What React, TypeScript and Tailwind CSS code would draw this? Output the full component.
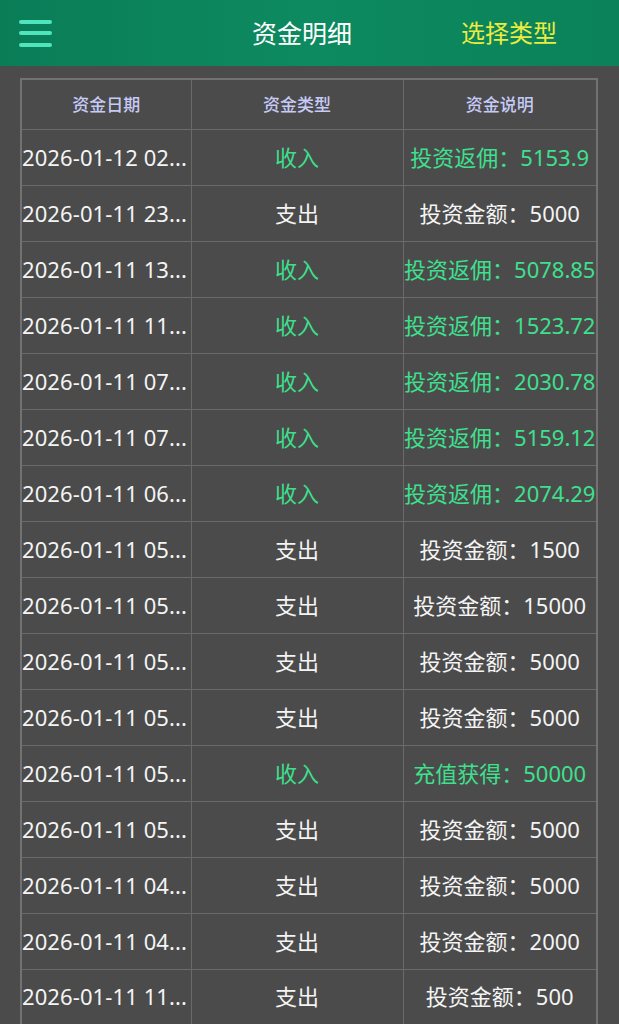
import React from "react"

type Row = { date: string; type: "收入" | "支出"; note: string }

const rows: Row[] = [
  { date: "2026-01-12 02...", type: "收入", note: "投资返佣：5153.9" },
  { date: "2026-01-11 23...", type: "支出", note: "投资金额：5000" },
  { date: "2026-01-11 13...", type: "收入", note: "投资返佣：5078.85" },
  { date: "2026-01-11 11...", type: "收入", note: "投资返佣：1523.72" },
  { date: "2026-01-11 07...", type: "收入", note: "投资返佣：2030.78" },
  { date: "2026-01-11 07...", type: "收入", note: "投资返佣：5159.12" },
  { date: "2026-01-11 06...", type: "收入", note: "投资返佣：2074.29" },
  { date: "2026-01-11 05...", type: "支出", note: "投资金额：1500" },
  { date: "2026-01-11 05...", type: "支出", note: "投资金额：15000" },
  { date: "2026-01-11 05...", type: "支出", note: "投资金额：5000" },
  { date: "2026-01-11 05...", type: "支出", note: "投资金额：5000" },
  { date: "2026-01-11 05...", type: "收入", note: "充值获得：50000" },
  { date: "2026-01-11 05...", type: "支出", note: "投资金额：5000" },
  { date: "2026-01-11 04...", type: "支出", note: "投资金额：5000" },
  { date: "2026-01-11 04...", type: "支出", note: "投资金额：2000" },
  { date: "2026-01-11 11...", type: "支出", note: "投资金额：500" },
]

const font = { fontFamily: '"Noto Sans", "Noto Sans CJK SC", sans-serif' }

export default function App() {
  return (
    <div className="min-h-[1024px] bg-[#4b4b4b]" style={font}>
      <header className="flex h-[66px] items-center bg-gradient-to-r from-[#0a7d57] via-[#0d8a60] to-[#0b8259] px-[19px]">
        <div className="flex w-[33px] flex-col gap-[7.5px]">
          <span className="h-[4px] rounded-full bg-[#4fe6bd]" />
          <span className="h-[4px] rounded-full bg-[#4fe6bd]" />
          <span className="h-[4px] rounded-full bg-[#4fe6bd]" />
        </div>
        <h1 className="ml-[200px] text-[25px] leading-none text-white">资金明细</h1>
        <button className="ml-auto mr-[43px] text-[24px] leading-none text-[#ecec3e]">选择类型</button>
      </header>

      <div className="px-[20px] pt-[12px]">
        <table className="w-[578px] table-fixed border-collapse border-2 border-[#727272]">
          <colgroup>
            <col className="w-[170px]" />
            <col className="w-[212px]" />
            <col />
          </colgroup>
          <thead>
            <tr className="h-[50px] text-[17px] text-[#c6caf6]">
              <th className="border border-[#6a6a6a] font-medium">资金日期</th>
              <th className="border border-[#6a6a6a] font-medium">资金类型</th>
              <th className="border border-[#6a6a6a] font-medium">资金说明</th>
            </tr>
          </thead>
          <tbody>
            {rows.map((r, i) => {
              const isIn = r.type === "收入"
              const color = isIn ? "text-[#3ee08e]" : "text-[#f4f4f4]"
              return (
                <tr key={i} className="h-[56px] text-[22px]">
                  <td className="whitespace-nowrap border border-[#6a6a6a] text-[22px] tracking-[0.1px] text-[#f4f4f4]">
                    {r.date}
                  </td>
                  <td className={`border border-[#6a6a6a] text-center ${color}`}>{r.type}</td>
                  <td className={`whitespace-nowrap border border-[#6a6a6a] text-center ${color}`}>{r.note}</td>
                </tr>
              )
            })}
          </tbody>
        </table>
      </div>
    </div>
  )
}
